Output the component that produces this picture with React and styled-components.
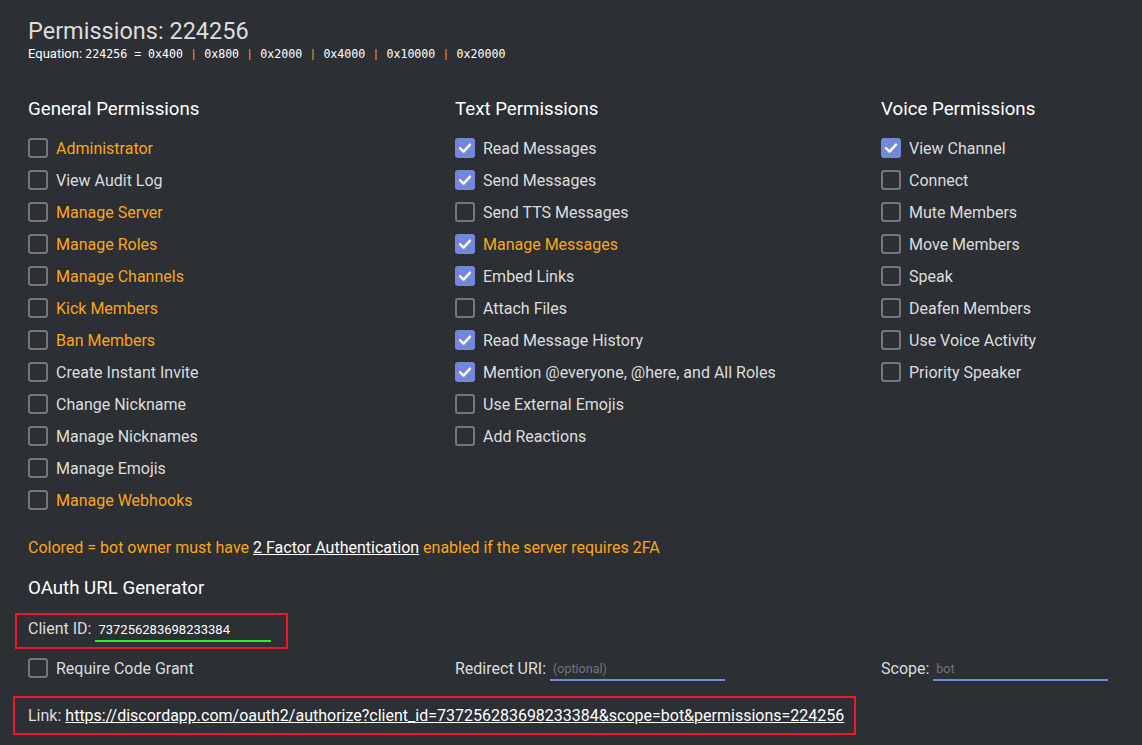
import React from "react";
import styled, { createGlobalStyle } from "styled-components";

const orange = "#faa61a";

const general = [
  ["Administrator", true, false],
  ["View Audit Log", false, false],
  ["Manage Server", true, false],
  ["Manage Roles", true, false],
  ["Manage Channels", true, false],
  ["Kick Members", true, false],
  ["Ban Members", true, false],
  ["Create Instant Invite", false, false],
  ["Change Nickname", false, false],
  ["Manage Nicknames", false, false],
  ["Manage Emojis", false, false],
  ["Manage Webhooks", true, false],
];

const text = [
  ["Read Messages", false, true],
  ["Send Messages", false, true],
  ["Send TTS Messages", false, false],
  ["Manage Messages", true, true],
  ["Embed Links", false, true],
  ["Attach Files", false, false],
  ["Read Message History", false, true],
  ["Mention @everyone, @here, and All Roles", false, true],
  ["Use External Emojis", false, false],
  ["Add Reactions", false, false],
];

const voice = [
  ["View Channel", false, true],
  ["Connect", false, false],
  ["Mute Members", false, false],
  ["Move Members", false, false],
  ["Speak", false, false],
  ["Deafen Members", false, false],
  ["Use Voice Activity", false, false],
  ["Priority Speaker", false, false],
];

const hex = ["0x400", "0x800", "0x2000", "0x4000", "0x10000", "0x20000"];

const Check = ({ checked }) => (
  <Box checked={checked}>
    {checked && (
      <svg width="14" height="14" viewBox="0 0 14 14">
        <path d="M2 7.2 L5.6 10.6 L12 3.6" fill="none" stroke="#fff" strokeWidth="2.4" strokeLinecap="round" strokeLinejoin="round" />
      </svg>
    )}
  </Box>
);

const Column = ({ title, items }) => (
  <Col>
    <Heading>{title}</Heading>
    <List>
      {items.map(([label, colored, checked]) => (
        <Row key={label}>
          <Check checked={checked} />
          <Label colored={colored}>{label}</Label>
        </Row>
      ))}
    </List>
  </Col>
);

const App = () => {
  return (
    <>
      <GlobalStyle />
      <Page>
        <Title>Permissions: 224256</Title>
        <Equation>
          Equation: <Mono>224256 = </Mono>
          {hex.map((h, i) => (
            <React.Fragment key={h}>
              {i > 0 && <Pipe>|</Pipe>}
              <Mono>{h}</Mono>
            </React.Fragment>
          ))}
        </Equation>

        <Columns>
          <Column title="General Permissions" items={general} />
          <Column title="Text Permissions" items={text} />
          <Column title="Voice Permissions" items={voice} />
        </Columns>

        <Note>
          Colored = bot owner must have <a>2 Factor Authentication</a> enabled if the server requires 2FA
        </Note>

        <Heading>OAuth URL Generator</Heading>

        <ClientBox>
          <FieldLabel>Client ID:</FieldLabel>
          <Field value="737256283698233384" readOnly valid width="176px" />
        </ClientBox>

        <Options>
          <Row>
            <Check checked={false} />
            <Label>Require Code Grant</Label>
          </Row>
          <InputRow>
            <FieldLabel>Redirect URI:</FieldLabel>
            <Field placeholder="(optional)" width="175px" />
          </InputRow>
          <InputRow>
            <FieldLabel>Scope:</FieldLabel>
            <Field placeholder="bot" width="175px" />
          </InputRow>
        </Options>

        <LinkBox>
          Link:{" "}
          <a>https://discordapp.com/oauth2/authorize?client_id=737256283698233384&amp;scope=bot&amp;permissions=224256</a>
        </LinkBox>
      </Page>
    </>
  );
};

export default App;

const GlobalStyle = createGlobalStyle`
  html, body {
    margin: 0;
    background: #2c2f33;
  }
  body {
    font-family: Roboto, "Liberation Sans", sans-serif;
    color: #dcddde;
  }
`;

const Page = styled.div`
  width: 1142px;
  height: 745px;
  box-sizing: border-box;
  padding: 16px 0 0 28px;
  overflow: hidden;
`;

const Title = styled.h1`
  margin: 0;
  font-size: 23.5px;
  font-weight: 400;
  line-height: 30px;
  color: #dcddde;
`;

const Equation = styled.div`
  font-size: 13px;
  line-height: 16px;
  color: #fff;
  white-space: nowrap;
`;

const Mono = styled.span`
  font-family: "DejaVu Sans Mono", "Liberation Mono", monospace;
  font-size: 11.6px;
`;

const Pipe = styled.span`
  color: ${orange};
  margin: 0 9px;
  font-size: 13px;
`;

const Columns = styled.div`
  display: grid;
  grid-template-columns: 427px 426px 1fr;
  margin-top: 36px;
`;

const Col = styled.div`
  display: flex;
  flex-direction: column;
`;

const Heading = styled.h2`
  margin: 0;
  font-size: 18.7px;
  font-weight: 400;
  line-height: 22px;
  color: #fff;
`;

const List = styled.div`
  display: flex;
  flex-direction: column;
  gap: 12px;
  margin-top: 18px;
`;

const Row = styled.label`
  display: flex;
  align-items: center;
  gap: 8px;
  height: 20px;
`;

const Box = styled.span`
  box-sizing: border-box;
  width: 20px;
  height: 20px;
  flex: none;
  border-radius: 3px;
  display: flex;
  align-items: center;
  justify-content: center;
  border: ${(p) => (p.checked ? "none" : "2px solid #72767d")};
  background: ${(p) => (p.checked ? "#7289da" : "transparent")};
`;

const Label = styled.span`
  font-size: 16px;
  color: ${(p) => (p.colored ? orange : "#dcddde")};
`;

const Note = styled.div`
  margin-top: 28px;
  margin-bottom: 20px;
  font-size: 16px;
  color: ${orange};

  & a {
    color: #fff;
    text-decoration: underline;
  }
`;

const ClientBox = styled.div`
  display: flex;
  align-items: center;
  gap: 4px;
  width: 273px;
  height: 36px;
  box-sizing: border-box;
  margin: 14px 0 0 -13px;
  padding: 0 0 5px 11px;
  border: 2px solid #f0142f;
`;

const FieldLabel = styled.span`
  font-size: 16px;
  color: #dcddde;
  white-space: nowrap;
`;

const Field = styled.input`
  width: ${(p) => p.width};
  box-sizing: border-box;
  background: transparent;
  border: none;
  border-bottom: 2px solid ${(p) => (p.valid ? "#2ef02a" : "#7289da")};
  outline: none;
  padding: 4px 3px 3px;
  font-family: Roboto, sans-serif;
  font-size: ${(p) => (p.valid ? "13px" : "12.5px")};
  color: #fff;
  margin-top: 2px;

  &::placeholder {
    color: #72767d;
  }
`;

const Options = styled.div`
  display: grid;
  grid-template-columns: 427px 426px 1fr;
  align-items: center;
  margin-top: 9px;
`;

const InputRow = styled.div`
  display: flex;
  align-items: center;
  gap: 4px;
  height: 20px;
`;

const LinkBox = styled.div`
  display: flex;
  align-items: center;
  gap: 4px;
  width: 843px;
  height: 39px;
  box-sizing: border-box;
  margin: 18px 0 0 -15px;
  padding-left: 13px;
  border: 2px solid #f0142f;
  font-size: 16px;
  color: #dcddde;
  white-space: nowrap;

  & a {
    color: #fff;
    text-decoration: underline;
  }
`;
